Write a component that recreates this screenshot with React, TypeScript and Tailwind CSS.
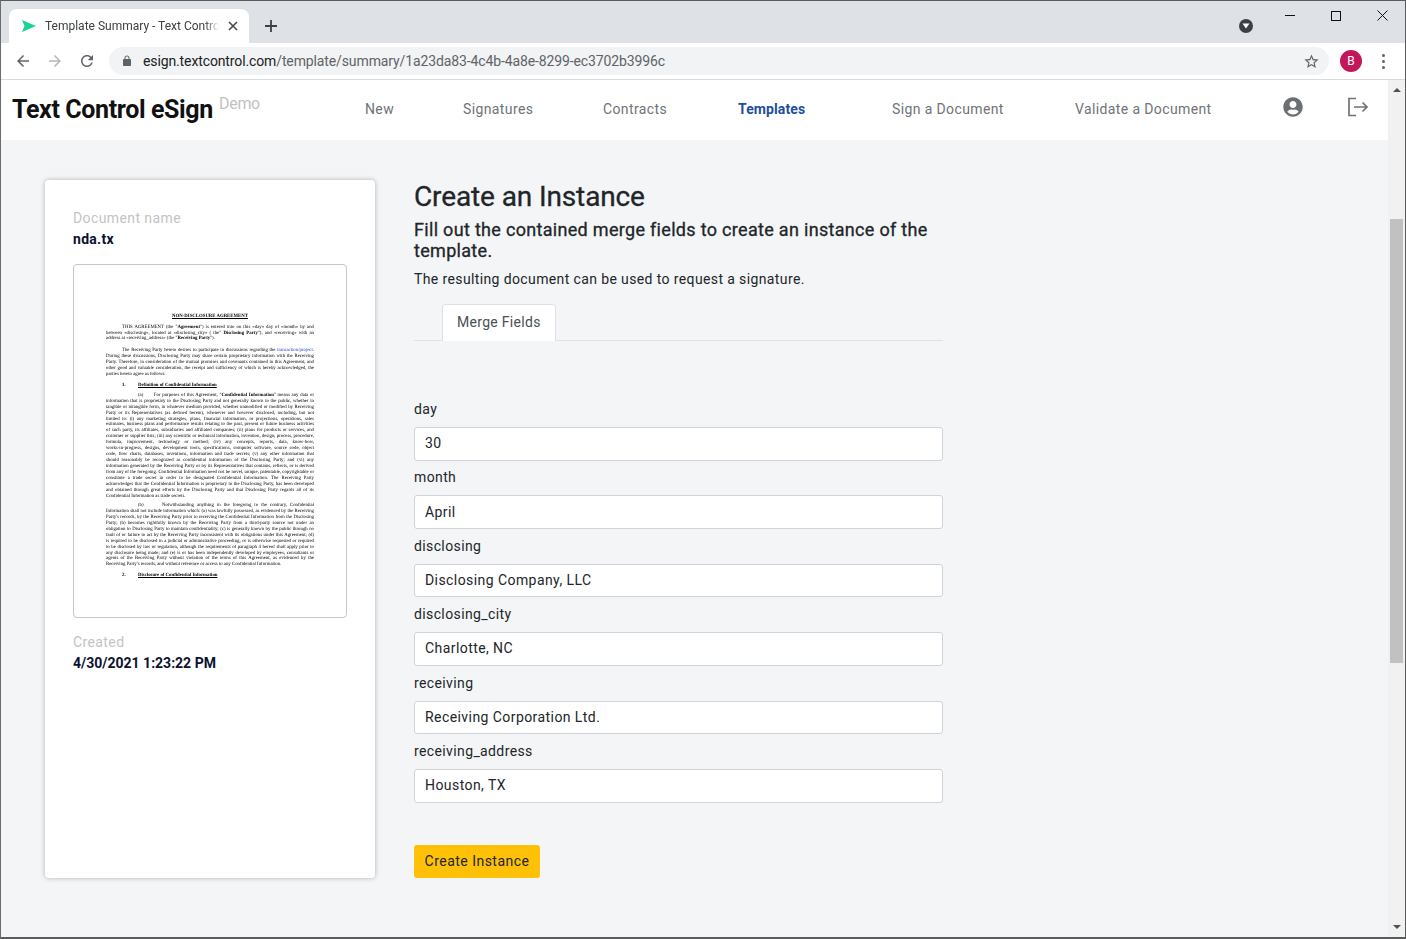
import { FaUserCircle } from 'react-icons/fa';

const docFont = { fontFamily: '"Liberation Serif", serif' };

const fields = [
  { label: 'day', value: '30' },
  { label: 'month', value: 'April' },
  { label: 'disclosing', value: 'Disclosing Company, LLC' },
  { label: 'disclosing_city', value: 'Charlotte, NC' },
  { label: 'receiving', value: 'Receiving Corporation Ltd.' },
  { label: 'receiving_address', value: 'Houston, TX' },
];

const navItems = [
  { label: 'New', left: 'w-[98px]' },
  { label: 'Signatures', left: 'w-[140px]' },
  { label: 'Contracts', left: 'w-[135px]' },
  { label: 'Templates', left: 'w-[154px]', active: true },
  { label: 'Sign a Document', left: 'w-[183px]' },
  { label: 'Validate a Document', left: 'w-[208px]' },
];

// thumbnail text, one entry per line of the page. *bold* and ~link~
const para1 = [
  'THIS AGREEMENT (the "*Agreement*") is entered into on this «day» day of «month» by and',
  'between «disclosing», located at «disclosing_city» ( the" *Disclosing Party*"), and «receiving» with an',
  'address at «receiving_address» (the "*Receiving Party*").',
];
const para2 = [
  'The Receiving Party hereto desires to participate in discussions regarding the ~transaction/project~.',
  'During these discussions, Disclosing Party may share certain proprietary information with the Receiving',
  'Party. Therefore, in consideration of the mutual promises and covenants contained in this Agreement, and',
  'other good and valuable consideration, the receipt and sufficiency of which is hereby acknowledged, the',
  'parties hereto agree as follows:',
];
const para3 = [
  '(a)\u00a0\u00a0\u00a0\u00a0\u00a0\u00a0For purposes of this Agreement, "*Confidential Information*" means any data or',
  'information that is proprietary to the Disclosing Party and not generally known to the public, whether in',
  'tangible or intangible form, in whatever medium provided, whether unmodified or modified by Receiving',
  'Party or its Representatives (as defined herein), whenever and however disclosed, including, but not',
  'limited to: (i) any marketing strategies, plans, financial information, or projections, operations, sales',
  'estimates, business plans and performance results relating to the past, present or future business activities',
  'of such party, its affiliates, subsidiaries and affiliated companies; (ii) plans for products or services, and',
  'customer or supplier lists; (iii) any scientific or technical information, invention, design, process, procedure,',
  'formula, improvement, technology or method; (iv) any concepts, reports, data, know-how,',
  'works-in-progress, designs, development tools, specifications, computer software, source code, object',
  'code, flow charts, databases, inventions, information and trade secrets; (v) any other information that',
  'should reasonably be recognized as confidential information of the Disclosing Party; and (vi) any',
  'information generated by the Receiving Party or by its Representatives that contains, reflects, or is derived',
  'from any of the foregoing. Confidential Information need not be novel, unique, patentable, copyrightable or',
  'constitute a trade secret in order to be designated Confidential Information. The Receiving Party',
  'acknowledges that the Confidential Information is proprietary to the Disclosing Party, has been developed',
  'and obtained through great efforts by the Disclosing Party and that Disclosing Party regards all of its',
  'Confidential Information as trade secrets.',
];
const para4 = [
  '(b)\u00a0\u00a0\u00a0\u00a0\u00a0\u00a0Notwithstanding anything in the foregoing to the contrary, Confidential',
  'Information shall not include information which: (a) was lawfully possessed, as evidenced by the Receiving',
  "Party's records, by the Receiving Party prior to receiving the Confidential Information from the Disclosing",
  'Party; (b) becomes rightfully known by the Receiving Party from a third-party source not under an',
  'obligation to Disclosing Party to maintain confidentiality; (c) is generally known by the public through no',
  'fault of or failure to act by the Receiving Party inconsistent with its obligations under this Agreement; (d)',
  'is required to be disclosed in a judicial or administrative proceeding, or is otherwise requested or required',
  'to be disclosed by law or regulation, although the requirements of paragraph 4 hereof shall apply prior to',
  'any disclosure being made; and (e) is or has been independently developed by employees, consultants or',
  'agents of the Receiving Party without violation of the terms of this Agreement, as evidenced by the',
  "Receiving Party's records, and without reference or access to any Confidential Information.",
];

function DocLine({ text }: { text: string }) {
  return (
    <>
      {text.split(/(\*[^*]+\*|~[^~]+~)/).map((p, i) => {
        if (p.startsWith('*')) return <b key={i}>{p.slice(1, -1)}</b>;
        if (p.startsWith('~')) return <span key={i} className="text-[#2b3fd0]">{p.slice(1, -1)}</span>;
        return p;
      })}
    </>
  );
}

function DocPara({ lines, indent, gap }: { lines: string[]; indent: string; gap: string }) {
  return (
    <div className={gap}>
      {lines.map((l, i) => {
        const last = i === lines.length - 1;
        return (
          <div key={i} className={`whitespace-nowrap ${i === 0 ? indent : ''} ${last ? '' : '[text-align:justify] [text-align-last:justify]'}`}>
            <DocLine text={l} />
          </div>
        );
      })}
    </div>
  );
}

function DocThumb() {
  return (
    <div className="mt-[14px] h-[354px] w-[274px] rounded border border-[#c4c6c9] bg-white pt-[49px] pl-[32px] pr-[32px] overflow-hidden">
      <div className="text-[4.8px] leading-[5.95px] text-black blur-[0.4px] [text-rendering:geometricPrecision]" style={docFont}>
        <div className="mb-[4.6px] text-center font-bold underline">NON-DISCLOSURE AGREEMENT</div>
        <DocPara lines={para1} indent="pl-[16px]" gap="mb-[6px]" />
        <DocPara lines={para2} indent="pl-[16px]" gap="mb-[4.6px]" />
        <div className="mb-[4px] flex font-bold"><span className="w-[32px] pl-[16px]">1.</span><span className="underline">Definition of Confidential Information</span></div>
        <DocPara lines={para3} indent="pl-[32px]" gap="mb-[3px]" />
        <DocPara lines={para4} indent="pl-[32px]" gap="mb-[4.8px]" />
        <div className="flex font-bold"><span className="w-[32px] pl-[16px]">2.</span><span className="underline">Disclosure of Confidential Information</span></div>
      </div>
    </div>
  );
}

function ChromeBar() {
  return (
    <div className="shrink-0" style={{ fontFamily: 'Roboto, sans-serif' }}>
      {/* tab strip */}
      <div className="flex h-[42px] items-end bg-[#dee1e6] pl-[8px]">
        <div className="flex h-[34px] w-[240px] items-center rounded-t-[8px] bg-white pl-[12px] pr-[9px]">
          <svg width="16" height="16" viewBox="0 0 16 16" className="shrink-0">
            <defs>
              <linearGradient id="fav" x1="0" y1="0" x2="1" y2="1">
                <stop offset="0" stopColor="#1fd08a" />
                <stop offset="1" stopColor="#12d6a8" />
              </linearGradient>
            </defs>
            <path d="M1 2l14 6-14 6 2.5-6z" fill="url(#fav)" />
          </svg>
          <span className="ml-[8px] w-[174px] overflow-hidden whitespace-nowrap text-[12px] text-[#3c4043] [mask-image:linear-gradient(to_right,black_92%,transparent)]">
            Template Summary - Text Control
          </span>
          <svg width="12" height="12" viewBox="0 0 12 12" className="ml-[8px] shrink-0" stroke="#45484c" strokeWidth="1.6">
            <path d="M2 2l8 8M10 2l-8 8" />
          </svg>
        </div>
        <svg width="14" height="14" viewBox="0 0 14 14" className="mb-[10px] ml-[15px]" stroke="#3c4043" strokeWidth="1.8">
          <path d="M7 1v12M1 7h12" />
        </svg>
        <div className="flex-1" />
        <div className="mb-[10px] mr-[14px] flex h-[14px] w-[14px] items-center justify-center rounded-full bg-[#3c4043]">
          <svg width="8" height="6" viewBox="0 0 8 6"><path d="M0.5 0.5h7L4 5.5z" fill="#fff" /></svg>
        </div>
        <div className="mb-[13px] flex h-[29px] items-start self-end">
          <div className="flex w-[46px] justify-center pt-[14px]"><div className="h-px w-[10px] bg-[#111]" /></div>
          <div className="flex w-[46px] justify-center pt-[10px]"><div className="h-[10px] w-[10px] border border-[#111]" /></div>
          <div className="flex w-[46px] justify-center pt-[9px]">
            <svg width="11" height="11" viewBox="0 0 11 11" stroke="#111" strokeWidth="1"><path d="M0.5 0.5l10 10M10.5 0.5l-10 10" /></svg>
          </div>
        </div>
      </div>
      {/* address bar */}
      <div className="flex h-[37px] items-center border-b border-[#d8dadc] bg-white">
        <svg width="18" height="18" viewBox="0 0 24 24" fill="#5f6368" className="ml-[13px]"><path d="M20 11H7.83l5.59-5.59L12 4l-8 8 8 8 1.41-1.41L7.83 13H20v-2z" /></svg>
        <svg width="18" height="18" viewBox="0 0 24 24" fill="#b4b7bb" className="ml-[14px]"><path d="M12 4l-1.41 1.41L16.17 11H4v2h12.17l-5.58 5.59L12 20l8-8z" /></svg>
        <svg width="18" height="18" viewBox="0 0 24 24" fill="#5f6368" className="ml-[14px]"><path d="M17.65 6.35C16.2 4.9 14.21 4 12 4c-4.42 0-7.99 3.58-7.99 8s3.57 8 7.99 8c3.73 0 6.84-2.55 7.73-6h-2.08c-.82 2.33-3.04 4-5.65 4-3.31 0-6-2.69-6-6s2.69-6 6-6c1.66 0 3.14.69 4.22 1.78L13 11h7V4l-2.35 2.35z" /></svg>
        <div className="ml-[13px] flex h-[28px] w-[1220px] items-center rounded-full bg-[#f1f3f4] pl-[12px] pr-[9px]">
          <svg width="12" height="12" viewBox="0 0 24 24" fill="#5f6368"><path d="M18 8h-1V6c0-2.76-2.24-5-5-5S7 3.24 7 6v2H6c-1.1 0-2 .9-2 2v10c0 1.1.9 2 2 2h12c1.1 0 2-.9 2-2V10c0-1.1-.9-2-2-2zM9 6c0-1.66 1.34-3 3-3s3 1.34 3 3v2H9V6z" /></svg>
          <span className="ml-[10px] text-[14px] tracking-[-0.12px] text-[#5f6368]">
            <span className="text-[#202124]">esign.textcontrol.com</span>/template/summary/1a23da83-4c4b-4a8e-8299-ec3702b3996c
          </span>
          <div className="flex-1" />
          <svg width="17" height="17" viewBox="0 0 24 24" fill="#5f6368"><path d="M22 9.24l-7.19-.62L12 2 9.19 8.63 2 9.24l5.46 4.73L5.82 21 12 17.27 18.18 21l-1.63-7.03L22 9.24zM12 15.4l-3.76 2.27 1-4.28-3.32-2.88 4.38-.38L12 6.1l1.71 4.04 4.38.38-3.32 2.88 1 4.28L12 15.4z" /></svg>
        </div>
        <div className="ml-[11px] flex h-[22px] w-[22px] items-center justify-center rounded-full bg-[#c2185b] text-[12px] text-white">B</div>
        <div className="ml-[20px] flex flex-col gap-[3px]">
          <div className="h-[3px] w-[3px] rounded-full bg-[#5f6368]" />
          <div className="h-[3px] w-[3px] rounded-full bg-[#5f6368]" />
          <div className="h-[3px] w-[3px] rounded-full bg-[#5f6368]" />
        </div>
      </div>
    </div>
  );
}

function Header() {
  return (
    <header className="flex h-[60px] shrink-0 bg-white text-[14px] tracking-[0.38px]">
      <div className="w-[11px] shrink-0" />
      <div className="relative w-[353px] shrink-0">
        <span className="absolute left-0 top-[14px] whitespace-nowrap text-[25px] font-bold leading-[32px] tracking-[-0.38px] text-[#111]">Text Control eSign</span>
        <span className="absolute left-[207px] top-[14px] text-[16px] leading-[20px] tracking-[-0.3px] text-[#c2c2c2]">Demo</span>
      </div>
      {navItems.map(n => (
        <div key={n.label} className={`${n.left} shrink-0 pt-[19px] leading-[21px] ${n.active ? 'font-bold text-[#1f4e9c] tracking-[0.1px]' : 'text-[#6f7377]'}`}>
          {n.label}
        </div>
      ))}
      <FaUserCircle className="mt-[17px] h-[20px] w-[20px] shrink-0 text-[#6b6e72]" />
      <svg width="22" height="20" viewBox="0 0 22 20" fill="none" stroke="#6f7377" strokeWidth="1.7" className="ml-[44px] mt-[17px] shrink-0">
        <path d="M9 1.5H2v17h7M7 10h13M15.5 5.5L20 10l-4.5 4.5" />
      </svg>
    </header>
  );
}

function Scrollbar() {
  return (
    <div className="flex w-[17px] shrink-0 flex-col items-center bg-[#f1f1f1]">
      <svg width="8" height="5" viewBox="0 0 8 5" className="mt-[7px]"><path d="M0 5l4-4 4 4z" fill="#505050" /></svg>
      <div className="mt-[127px] h-[444px] w-[13px] bg-[#c1c1c1]" />
      <div className="flex-1" />
      <svg width="8" height="5" viewBox="0 0 8 5" className="mb-[7px]"><path d="M0 0l4 4 4-4z" fill="#505050" /></svg>
    </div>
  );
}

export default function App() {
  return (
    <div className="flex h-[939px] w-[1406px] flex-col overflow-hidden border border-b-2 border-[#5a5c5e] border-l-[#6a6c6e] bg-[#f4f5f7]" style={{ fontFamily: 'Roboto, sans-serif' }}>
      <ChromeBar />
      <div className="flex min-h-0 flex-1">
        <div className="flex min-w-0 flex-1 flex-col">
          <Header />
          <main className="flex flex-1 pt-[40px] pl-[44px]">
            {/* Left card */}
            <div className="h-[698px] w-[330px] shrink-0 rounded-[4px] bg-white px-[28px] pt-[28px] shadow-[0_0_5px_rgba(0,0,0,0.28)]">
              <p className="text-[14px] leading-[21px] tracking-[0.4px] text-[#c4c4c4]">Document name</p>
              <p className="text-[14px] font-bold leading-[21px] tracking-[0.3px] text-[#0b1230]">nda.tx</p>
              <DocThumb />
              <p className="mt-[14px] text-[14px] leading-[21px] tracking-[0.4px] text-[#c4c4c4]">Created</p>
              <p className="text-[14px] font-bold leading-[21px] text-[#0b1230]">4/30/2021 1:23:22 PM</p>
            </div>

            {/* Form */}
            <div className="ml-[39px] w-[529px] shrink-0 text-[#212529]">
              <h1 className="text-[28px] font-normal leading-[34px] tracking-[-0.12px] [-webkit-text-stroke:0.3px_#212529]">Create an Instance</h1>
              <h2 className="mt-[6px] text-[18px] font-normal leading-[20.5px] tracking-[0.31px] [-webkit-text-stroke:0.3px_#212529]">Fill out the contained merge fields to create an instance of the template.</h2>
              <p className="mt-[8px] text-[14px] leading-[21px] tracking-[0.38px]">The resulting document can be used to request a signature.</p>
              <div className="mt-[14px] flex h-[37px] border-b border-[#dee2e6] pl-[28px]">
                <div className="h-[37px] rounded-t-[4px] border border-b-0 border-[#dee2e6] bg-white px-[14px] pt-[7px] text-[14px] leading-[21px] tracking-[0.3px] text-[#495057]">Merge Fields</div>
              </div>
              <div className="mt-[58px] flex flex-col">
                {fields.map(f => (
                  <div key={f.label} className="mb-[7px] h-[61.4px]">
                    <label className="block h-[28px] text-[14px] leading-[21px] tracking-[0.38px]">{f.label}</label>
                    <input
                      readOnly
                      value={f.value}
                      className="block h-[33.6px] w-full rounded-[3px] border border-[#ced4da] bg-white px-[10px] pb-[1px] text-[14px] tracking-[0.43px] text-[#212529] outline-none"
                    />
                  </div>
                ))}
              </div>
              <button className="mt-[35.6px] h-[33px] w-[126px] rounded-[3px] bg-[#ffc107] text-[14px] tracking-[0.48px] text-[#212529]">Create Instance</button>
            </div>
          </main>
        </div>
        <Scrollbar />
      </div>
    </div>
  );
}
